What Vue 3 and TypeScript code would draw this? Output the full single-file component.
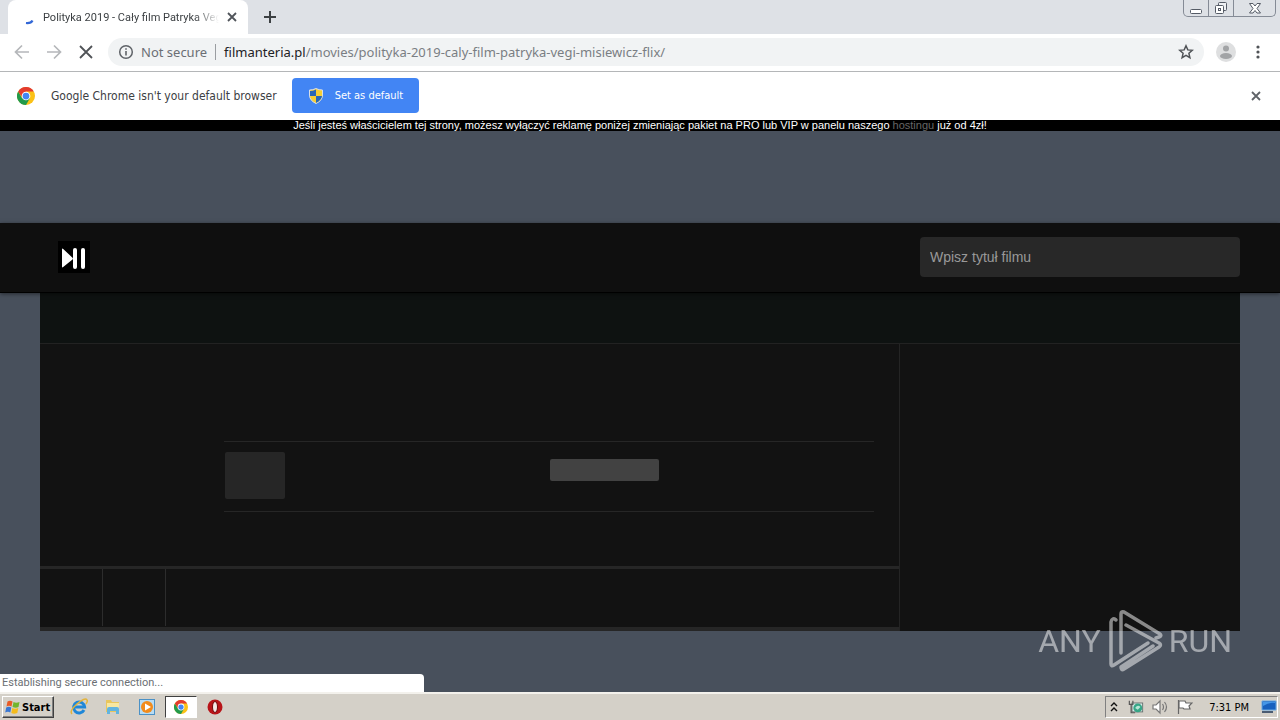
<script setup lang="ts">
import { ref } from 'vue'

const path = ref('/movies/polityka-2019-caly-film-patryka-vegi-misiewicz-flix/')
const query = ref('')
const showInfobar = ref(true)
</script>

<template>
  <div class="desktop">
    <svg class="defs" width="0" height="0" aria-hidden="true">
      <symbol id="chrome-mark" viewBox="0 0 24 24">
        <circle cx="12" cy="12" r="12" fill="#fbc116" />
        <path d="M1.6 6A12 12 0 0 0 12 24L17.2 15 12 12 6.8 15Z" fill="#229a4b" />
        <path d="M1.6 6A12 12 0 0 1 22.4 6H12L7 14Z" fill="#e33b2e" />
        <circle cx="12" cy="12" r="5.8" fill="#fff" />
        <circle cx="12" cy="12" r="4.5" fill="#4285f4" />
      </symbol>
    </svg>

    <header class="titlebar">
      <div class="tab">
        <svg class="spinner" width="16" height="16" viewBox="0 0 16 16"><path d="M7 14Q12 14.500 13.500 11.500" fill="none" stroke="#3267d6" stroke-width="2.200" /></svg>
        <span class="tab-title">Polityka 2019 - Cały film Patryka Veg</span>
        <button class="plain tab-close" aria-label="Close tab">
          <svg width="10" height="10" viewBox="0 0 10 10"><path d="m1 1 8 8M9 1 1 9" stroke="#50545a" stroke-width="1.8" /></svg>
        </button>
      </div>
      <button class="plain new-tab" aria-label="New tab">
        <svg width="12" height="12" viewBox="0 0 12 12"><path d="M6 0v12M0 6h12" stroke="#3c4043" stroke-width="2" /></svg>
      </button>
      <div class="window-buttons">
        <button aria-label="Minimize">
          <svg width="14" height="14" viewBox="0 0 14 14"><rect x="1.5" y="8.500" width="11" height="4" rx="1" fill="#fff" stroke="#555b66" /></svg>
        </button>
        <button aria-label="Restore">
          <svg width="14" height="14" viewBox="0 0 14 14"><rect x="4.500" y="1.500" width="8" height="8" rx="1" fill="#eef0f3" stroke="#555b66" /><rect x="1.500" y="4.500" width="8" height="8" rx="1" fill="#fff" stroke="#555b66" /><rect x="4.500" y="7.500" width="2" height="2" fill="none" stroke="#555b66" /></svg>
        </button>
        <button class="wide" aria-label="Close window">
          <svg width="14" height="14" viewBox="0 0 14 14"><path d="M1.500 2.500h3.500l2 2.500 2-2.500h3.500L9 7.500l3.500 4.500H9L7 9.500 5 12H1.500L5 7.500Z" fill="#fff" stroke="#555b66" /></svg>
        </button>
      </div>
    </header>

    <nav class="toolbar" aria-label="Browser">
      <button class="plain nav" aria-label="Back">
        <svg width="16" height="16" viewBox="0 0 16 16"><path d="M15 8H2M8 1.500 1.500 8 8 14.500" fill="none" stroke="#b5b7ba" stroke-width="1.700" /></svg>
      </button>
      <button class="plain nav" aria-label="Forward">
        <svg width="16" height="16" viewBox="0 0 16 16"><path d="M1 8h13M8 1.500 14.500 8 8 14.500" fill="none" stroke="#b5b7ba" stroke-width="1.700" /></svg>
      </button>
      <button class="plain nav" aria-label="Stop">
        <svg width="14" height="14" viewBox="0 0 14 14"><path d="m1 1 12 12M13 1 1 13" stroke="#505357" stroke-width="1.800" /></svg>
      </button>
      <div class="omnibox">
        <svg width="16" height="16" viewBox="0 0 16 16"><circle cx="8" cy="8" r="6.300" fill="none" stroke="#5f6368" stroke-width="1.500" /><path d="M8 7v4.500M8 4.200v1.600" stroke="#5f6368" stroke-width="1.600" /></svg>
        <span class="security">Not secure</span>
        <label class="host" for="address">filmanteria.pl</label>
        <input id="address" v-model="path" class="address" type="text" spellcheck="false" />
        <button class="plain" aria-label="Bookmark this page">
          <svg width="16" height="16" viewBox="0 0 16 16"><path d="m8 1.800 1.800 4.100 4.500.4-3.400 3 1 4.400L8 11.400l-3.900 2.300 1-4.400-3.400-3 4.500-.4Z" fill="none" stroke="#505357" stroke-width="1.500" /></svg>
        </button>
      </div>
      <button class="plain profile" aria-label="Profile">
        <svg width="20" height="20" viewBox="0 0 20 20"><circle cx="10" cy="10" r="10" fill="#dedfe0" /><circle cx="10" cy="6.500" r="3" fill="#a2a4a6" /><ellipse cx="10" cy="14" rx="6" ry="3" fill="#a2a4a6" /></svg>
      </button>
      <button class="plain more" aria-label="Menu">
        <svg width="4" height="14" viewBox="0 0 4 14" fill="#505357"><circle cx="2" cy="2" r="1.600" /><circle cx="2" cy="7" r="1.600" /><circle cx="2" cy="12" r="1.600" /></svg>
      </button>
    </nav>

    <section v-if="showInfobar" class="infobar">
      <svg width="18" height="18"><use href="#chrome-mark" /></svg>
      <span class="info-text">Google Chrome isn't your default browser</span>
      <button class="set-default">
        <svg width="14" height="16" viewBox="0 0 14 16"><path d="M7 .5Q10 2 13.500 2v5q0 5.500-6.500 8.500Q.5 12.500.5 7V2Q4 2 7 .5Z" fill="#f6cf35" stroke="#d8dfe8" /><path d="M7 1.500V8H1V3Q4 3 7 1.500ZM7 8h6q-.5 4-6 7Z" fill="#2867b8" /></svg>
        Set as default
      </button>
      <button class="plain info-close" aria-label="Dismiss" @click="showInfobar = false">
        <svg width="10" height="10" viewBox="0 0 10 10"><path d="m1 1 8 8M9 1 1 9" stroke="#5f6368" stroke-width="1.800" /></svg>
      </button>
    </section>

    <div class="viewport">
      <p class="notice">Jeśli jesteś właścicielem tej strony, możesz wyłączyć reklamę poniżej zmieniając pakiet na PRO lub VIP w panelu naszego <a href="#">hostingu</a> już od 4zł!</p>
      <div class="ad-space"></div>
      <header class="site-header">
        <a class="logo" href="#" aria-label="Filmanteria">
          <svg width="32" height="32" viewBox="0 0 32 32"><rect width="32" height="32" fill="#000" /><path d="M4 8.500v17q0 1.500 1.200.5L14.500 18.500q.8-1 0-1.800L5.200 8Q4 7 4 8.500Z" fill="#fff" /><rect x="15" y="7" width="4" height="21" rx="2" fill="#fff" /><rect x="23" y="7" width="4" height="21" rx="2" fill="#fff" /></svg>
        </a>
        <input v-model="query" class="search" type="text" placeholder="Wpisz tytuł filmu" aria-label="Wpisz tytuł filmu" />
      </header>
      <main class="content">
        <div class="band"></div>
        <div class="columns">
          <article class="movie">
            <div class="sheet">
              <div class="rating">
                <div class="score"></div>
                <div class="votes"></div>
              </div>
            </div>
            <div class="player-tabs">
              <div class="player-tab"></div>
              <div class="player-tab"></div>
            </div>
          </article>
          <aside></aside>
        </div>
      </main>
      <div class="status">Establishing secure connection...</div>
      <div class="watermark">
        <span>ANY</span>
        <svg width="56" height="64" viewBox="0 0 56 64" fill="none" stroke="currentColor" stroke-width="3.500" stroke-linejoin="round" stroke-linecap="round">
          <path d="M14 44V5q0-3 3-2L53 25q2 2-1 3l-3 1" />
          <path d="M9 11q-4-3-5 2v42q0 3 3 1L41 34" />
          <path d="M19 16 52 34q3 2 0 4L17 60q-3 2-3-2l32-21" />
        </svg>
        <span>RUN</span>
      </div>
    </div>

    <footer class="taskbar">
      <button class="start">
        <svg width="16" height="16" viewBox="0 0 16 16"><path d="M2.500 2.500Q5 1 7.500 2.500L6.500 7.500Q4 6 1.500 7.500Z" fill="#e95b25" /><path d="M8.500 3Q11 4.500 14.500 3L13.500 8Q11 9.500 7.500 8Z" fill="#72b52c" /><path d="M1.200 8.500Q4 7 6.300 8.500L5.300 13.500Q3 12 .2 13.500Z" fill="#3977d3" /><path d="M7.300 9Q10 10.500 13.300 9L12.300 14Q9 15.500 6.300 14Z" fill="#f5bc1c" /></svg>
        Start
      </button>
      <div class="launchers">
        <button aria-label="Internet Explorer">
          <svg width="18" height="18" viewBox="0 0 18 18" fill="none"><path d="M14 12a5.500 5.500 0 1 1 .6-3H5" stroke="#1f87d8" stroke-width="3" /><path d="M2 16Q-1 13 7 6T17 2q1 1-1 4" stroke="#e4b43a" stroke-width="1.500" /></svg>
        </button>
        <button aria-label="Explorer">
          <svg width="18" height="18" viewBox="0 0 18 18"><path d="M2 2h5l1 2h7v10H2Z" fill="#e9c65d" /><path d="M3 5h12v8H3Z" fill="#f8e7a0" /><path d="M3 16v-5q0-2 2-2h8q2 0 2 2v5h-3v-3H6v3Z" fill="#62b4df" /></svg>
        </button>
        <button aria-label="Media Player">
          <svg width="18" height="18" viewBox="0 0 18 18"><rect x="1.500" y="1.500" width="15" height="15" fill="#b8dcf3" stroke="#4b91c6" /><circle cx="9" cy="9" r="6" fill="#f28b1b" /><path d="m7 5.500 6 3.500-6 3.500Z" fill="#fff" /></svg>
        </button>
        <button class="active" aria-label="Google Chrome"><svg width="14" height="14"><use href="#chrome-mark" /></svg></button>
        <button aria-label="Opera">
          <svg width="16" height="16" viewBox="0 0 16 16"><circle cx="8" cy="8" r="7.500" fill="#b81419" /><ellipse cx="8" cy="8" rx="2.500" ry="5.500" fill="#f4e9e7" stroke="#6e080c" /></svg>
        </button>
      </div>
      <div class="tray">
        <svg width="8" height="10" viewBox="0 0 8 10" fill="none" stroke="#111" stroke-width="1.400"><path d="m1 4 3-3 3 3M1 9l3-3 3 3" /></svg>
        <svg class="network" width="16" height="16" viewBox="0 0 18 16"><rect x="4.500" y="3.500" width="12" height="10" fill="#dce9e9" stroke="#626d6b" /><circle cx="11" cy="9" r="5" fill="#36a687" /><path d="M8 9q3-4 6-1l-3 3Z" fill="#b7e6d6" /><path d="M1.500 1v4h4V1M3.500 5v9.500H8" fill="none" stroke="#555" stroke-width="1.300" /></svg>
        <svg width="17" height="16" viewBox="0 0 17 16" fill="none" stroke="#777" stroke-width="1.200"><path d="M1 6h3l4-4v12l-4-4H1Z" fill="#fff" /><path d="M10.500 5q2 3 0 6M12.500 3q4 5 0 10" /></svg>
        <svg width="16" height="16" viewBox="0 0 16 16" fill="#fff" stroke="#666" stroke-width="1.200"><path d="M1.500 1v14" /><path d="M2 2h6l1 2h6l-3 3 1 3H7L6 9H2Z" /></svg>
        <time>7:31 PM</time>
        <svg width="16" height="14" viewBox="0 0 16 14"><path d="M1 1h14v9H1Z" fill="#1761be" stroke="#66a8e2" /><path d="M2 6Q8 2 14 3V2H2Z" fill="#4497e8" /><path d="M1 12h11" stroke="#4b5c72" stroke-width="2" /></svg>
      </div>
    </footer>
  </div>
</template>

<style>
body { margin: 0; }
</style>

<style scoped>
* { box-sizing: border-box; }
.desktop {
  display: flex;
  flex-direction: column;
  min-height: 100vh;
  font-family: "DejaVu Sans Condensed", "Noto Sans", sans-serif;
  font-size: 12px;
  color: #3c4043;
  background: #fff;
}
.defs { position: absolute; }
svg { display: block; flex: none; }
button, input { font: inherit; color: inherit; }
.plain { display: flex; align-items: center; justify-content: center; padding: 0; border: 0; background: none; }

.titlebar { display: flex; height: 34px; padding-left: 8px; background: #dee1e6; }
.tab { display: flex; align-items: center; width: 240px; padding: 0 11px; border-radius: 8px 8px 0 0; background: #fff; font-family: Roboto, sans-serif; font-size: 11px; }
.spinner { margin-right: 8px; }
.tab-title { flex: 1; min-width: 0; white-space: nowrap; mask-image: linear-gradient(to right, #000 86%, transparent); }
.tab-close { width: 10px; margin-left: 8px; }
.new-tab { width: 44px; }
.window-buttons { display: flex; height: 17px; margin: 0 4px 0 auto; border: 1px solid #858b96; border-top: 0; border-radius: 0 0 5px 5px; }
.window-buttons button { display: flex; align-items: center; justify-content: center; width: 25px; padding: 0; border: 0; border-right: 1px solid #858b96; background: none; }
.window-buttons .wide { width: 41px; border-right: 0; }

.toolbar { display: flex; align-items: center; height: 38px; padding: 0 20px 2px 6px; border-bottom: 1px solid #b4b6b8; }
.nav { width: 32px; height: 28px; }
.omnibox { display: flex; flex: 1; align-items: center; height: 28px; margin-left: 6px; padding: 0 10px; border-radius: 14px; background: #f1f3f4; font-family: "Noto Sans", sans-serif; font-size: 13px; }
.security { margin-left: 7px; padding-right: 8px; border-right: 1px solid #9a9da1; line-height: 16px; color: #6b6f74; }
.host { margin-left: 8px; color: #202124; }
.address { flex: 1; min-width: 0; padding: 0; border: 0; outline: 0; background: none; color: #7a7e83; }
.profile { width: 20px; margin-left: 12px; }
.more { width: 4px; margin-left: 20px; }

.infobar { display: flex; align-items: center; height: 48px; padding: 0 19px 1px 17px; }
.info-text { margin: 0 15px 0 16px; }
.set-default { display: flex; align-items: center; gap: 12px; height: 35px; padding: 0 16px 0 17px; border: 0; border-radius: 4px; background: #4285f4; color: #fff; font-size: 11px; }
.info-close { width: 10px; margin-left: auto; }

.viewport { position: relative; flex: 1; background: #48505c; }
.notice { margin: 0; height: 11px; background: #000; color: #fff; font: 11px/11px "Liberation Sans", Arial, sans-serif; text-align: center; }
.notice a { color: #666; text-decoration: none; }
.ad-space { height: 92px; }
.site-header { position: relative; display: flex; align-items: center; justify-content: space-between; height: 70px; padding: 0 40px 2px 58px; border-bottom: 1px solid #000; background: #0f0f0f; box-shadow: 0 1px 4px rgba(0, 0, 0, .5); }
.search { width: 320px; height: 40px; padding: 0 10px; border: 0; border-radius: 4px; outline: 0; background: #282828; color: #ddd; font: 14px "Liberation Sans", Arial, sans-serif; }
.search::placeholder { color: #999; opacity: 1; }

.content { margin: 0 40px 61px; background: #121212; }
.band { height: 51px; border-bottom: 1px solid #222; background: #0e1211; }
.columns { display: grid; grid-template-columns: 1fr 340px; }
.movie { border-right: 1px solid #242424; }
.sheet { padding: 97px 25px 54px 184px; }
.rating { display: grid; grid-template-columns: 1fr 1fr; align-items: start; height: 71px; border: solid #262626; border-width: 1px 0; }
.score { width: 60px; height: 47px; margin: 10px 1px; border-radius: 2px; background: #262626; }
.votes { width: 109px; height: 22px; margin: 17px 1px; border-radius: 2px; background: #424242; }
.player-tabs { display: flex; height: 65px; padding-bottom: 1px; border: solid #262626; border-width: 3px 0 4px; }
.player-tab { width: 63px; border-right: 1px solid #2c2c2c; }

.status { position: absolute; left: 0; bottom: 0; width: 424px; height: 18px; padding-left: 2px; border-radius: 0 4px 0 0; background: #fff; color: #6b6f74; font-family: Roboto, sans-serif; font-size: 11px; line-height: 18px; }
.watermark { position: absolute; right: 48px; bottom: 19px; display: flex; align-items: center; gap: 6px; color: #fff; opacity: .5; font: 32px/64px Roboto, sans-serif; }

.taskbar { display: flex; align-items: center; height: 28px; padding: 0 2px; border-top: 2px solid #f3f1ec; background: #d4d0c8; color: #000; }
.start { display: flex; align-items: center; gap: 1px; width: 52px; height: 22px; padding: 0 2px; border: 1px solid; border-color: #fff #404040 #404040 #fff; box-shadow: inset -1px -1px #808080; background: #d4d0c8; font-size: 11px; font-weight: 700; }
.launchers { display: flex; gap: 2px; margin-left: 9px; }
.launchers button { display: flex; align-items: center; justify-content: center; width: 32px; height: 22px; padding: 0; border: 0; background: none; }
.launchers .active { border: 1px solid; border-color: #404040 #fff #fff #404040; background: #fff; }
.tray { display: flex; align-items: center; gap: 8px; height: 22px; margin-left: auto; padding: 0 0 0 4px; border: 1px solid; border-color: #808080 #fff #fff #808080; font-size: 11px; }
.tray .network { margin-left: 2px; }
.tray time { margin: 0 4px 0 8px; }
</style>
